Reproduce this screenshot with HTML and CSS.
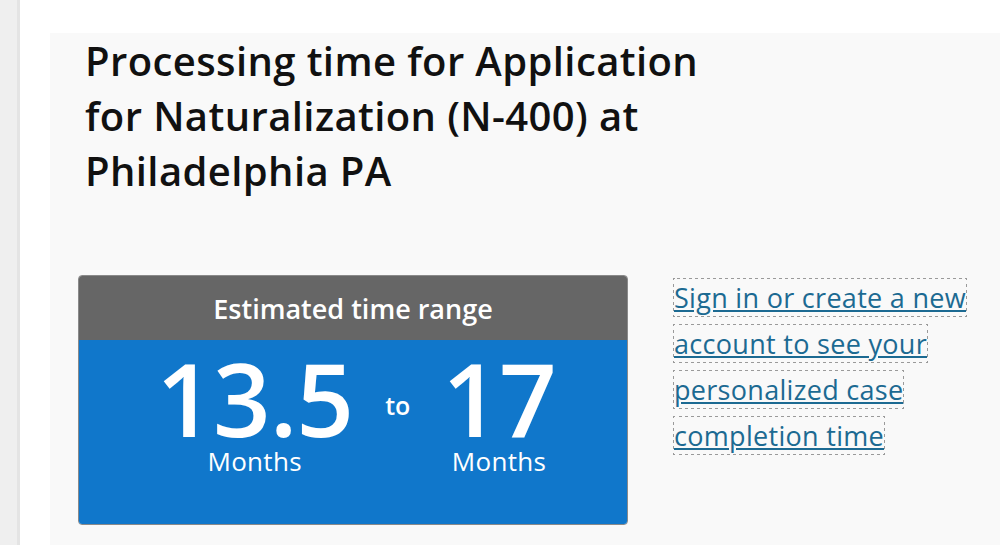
FILE: index.html
```html
<!DOCTYPE html>
<html lang="en">
  <head>
    <meta charset="UTF-8" />
    <meta name="viewport" content="width=device-width, initial-scale=1.0" />
    <title>Check case processing times</title>
    <link rel="stylesheet" href="styles.css">
  </head>

  <body>
    <div class="page">
      <div class="side"></div>

      <div class="panel">
        <h1 class="title">Processing time for Application for Naturalization (N-400) at Philadelphia PA</h1>

        <div class="result">
          <div class="card">
            <div class="card-head">Estimated time range</div>
            <div class="card-body">
              <div class="range">
                <div class="num">13.5</div>
                <div class="unit">Months</div>
              </div>
              <div class="to">to</div>
              <div class="range">
                <div class="num">17</div>
                <div class="unit">Months</div>
              </div>
            </div>
          </div>

          <p class="signin">
            <a href="#" class="signin-link">Sign in or create a new account to see your personalized case completion time</a>
          </p>
        </div>
      </div>
    </div>
  </body>
</html>
```

FILE: styles.css
```css
* {
  margin: 0;
  padding: 0;
  box-sizing: border-box;
}

html, body {
  overflow: hidden;
}

body {
  background-color: #ffffff;
  font-family: "Open Sans", "Liberation Sans", Arial, sans-serif;
  color: #111111;
}

.page {
  display: flex;
  height: 545px;
}

.side {
  width: 20px;
  background-color: #efefef;
  border-right: 3px solid #e4e4e4;
}

.panel {
  flex: 1;
  margin-left: 30px;
  margin-top: 33px;
  background-color: #f9f9f9;
  padding: 0 0 0 28px;
}

.title {
  font-size: 40px;
  font-weight: 600;
  line-height: 55px;
  letter-spacing: 0.4px;
  max-width: 640px;
  margin-left: 7px;
  color: #111111;
}

.result {
  display: flex;
  align-items: flex-start;
  margin-top: 77px;
}

.card {
  width: 550px;
  height: 250px;
  border: 1px solid #8a8a8a;
  border-radius: 4px;
  overflow: hidden;
  display: flex;
  flex-direction: column;
}

.card-head {
  height: 64px;
  background-color: #666666;
  color: #ffffff;
  font-size: 27px;
  font-weight: 600;
  display: flex;
  justify-content: center;
  align-items: center;
}

.card-body {
  flex: 1;
  background-color: #1077cb;
  color: #ffffff;
  display: flex;
  justify-content: center;
  align-items: flex-start;
  gap: 32px;
  padding-top: 18px;
  padding-left: 6px;
}

.range {
  display: flex;
  flex-direction: column;
  align-items: center;
}

.num {
  font-size: 101px;
  font-weight: 600;
  line-height: 80px;
  letter-spacing: -1px;
}

.unit {
  font-size: 26px;
  line-height: 26px;
  letter-spacing: 0.3px;
  margin-top: 10px;
}

.to {
  font-size: 25px;
  font-weight: 600;
  line-height: 25px;
  margin-top: 35px;
}

.signin {
  width: 310px;
  margin-left: 46px;
  margin-top: 0;
  font-size: 27px;
  line-height: 46px;
  letter-spacing: 0.3px;
}

.signin-link {
  color: #1c6a92;
  text-decoration: underline;
  outline: 1px dotted #9a9a9a;
}
```
